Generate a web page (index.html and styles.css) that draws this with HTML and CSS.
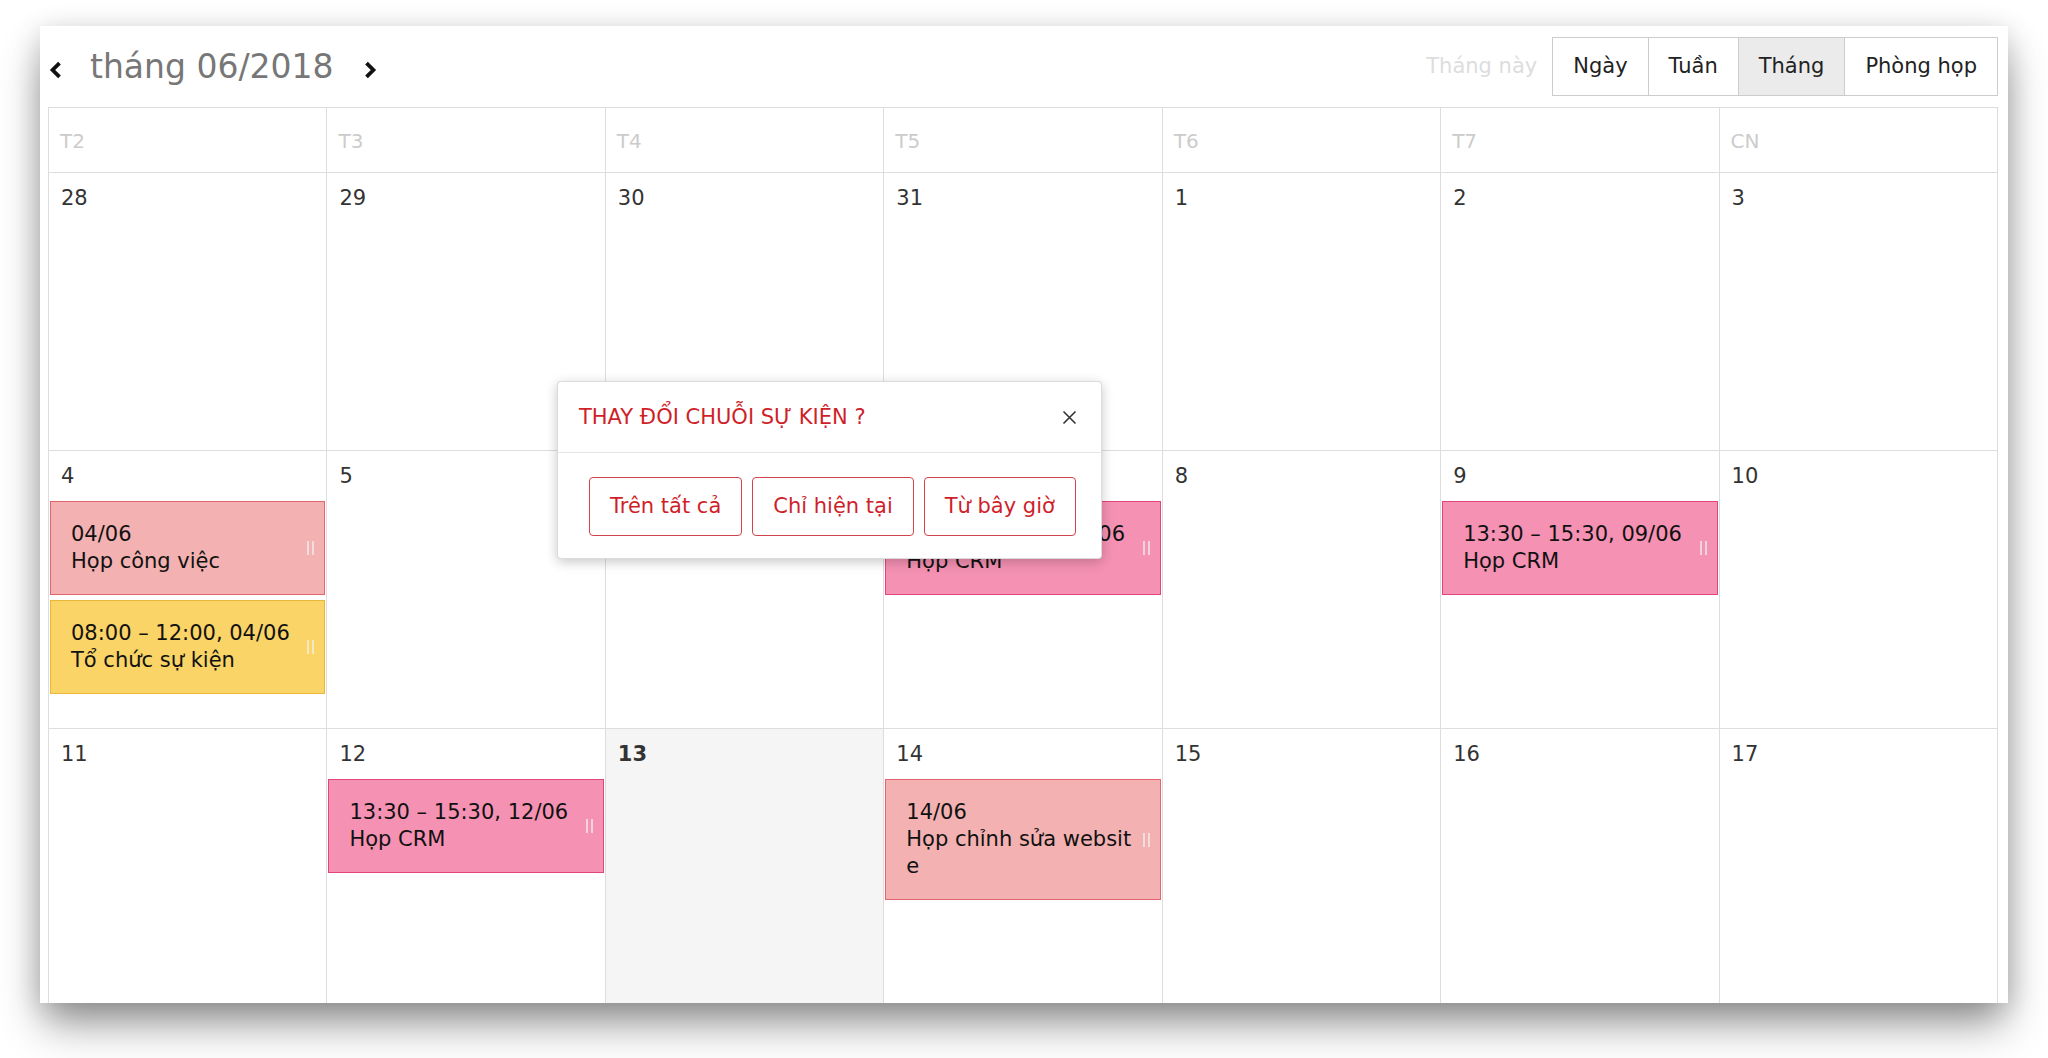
FILE: index.html
```html
<!DOCTYPE html>
<html lang="vi">
<head>
  <meta charset="UTF-8" />
  <meta name="viewport" content="width=device-width, initial-scale=1.0" />
  <title>Lịch tháng 06/2018</title>
  <link rel="stylesheet" href="styles.css">
</head>
<body>
  <div class="page">
    <div class="window">
      <header class="toolbar">
        <div class="nav">
          <button class="nav-arrow" aria-label="Tháng trước">
            <svg width="15" height="18" viewBox="0 0 15 18"><path d="M11.5 2.2 L4.6 9 L11.5 15.8" fill="none" stroke="#111" stroke-width="3.8"/></svg>
          </button>
          <h2 class="month-title">tháng 06/2018</h2>
          <button class="nav-arrow" aria-label="Tháng sau">
            <svg width="15" height="18" viewBox="0 0 15 18"><path d="M3.5 2.2 L10.4 9 L3.5 15.8" fill="none" stroke="#111" stroke-width="3.8"/></svg>
          </button>
        </div>
        <div class="views">
          <span class="today-link">Tháng này</span>
          <div class="view-group">
            <button class="view-btn">Ngày</button>
            <button class="view-btn">Tuần</button>
            <button class="view-btn active">Tháng</button>
            <button class="view-btn">Phòng họp</button>
          </div>
        </div>
      </header>

      <div class="month">
        <div class="dow">T2</div>
        <div class="dow">T3</div>
        <div class="dow">T4</div>
        <div class="dow">T5</div>
        <div class="dow">T6</div>
        <div class="dow">T7</div>
        <div class="dow">CN</div>

        <div class="day"><div class="day-num">28</div></div>
        <div class="day"><div class="day-num">29</div></div>
        <div class="day"><div class="day-num">30</div></div>
        <div class="day"><div class="day-num">31</div></div>
        <div class="day"><div class="day-num">1</div></div>
        <div class="day"><div class="day-num">2</div></div>
        <div class="day"><div class="day-num">3</div></div>

        <div class="day">
          <div class="day-num">4</div>
          <div class="event salmon">04/06<br>Họp công việc<span class="grip"></span></div>
          <div class="event yellow">08:00 – 12:00, 04/06<br>Tổ chức sự kiện<span class="grip"></span></div>
        </div>
        <div class="day"><div class="day-num">5</div></div>
        <div class="day"><div class="day-num">6</div></div>
        <div class="day">
          <div class="day-num">7</div>
          <div class="event pink">13:30 – 15:30, 07/06<br>Họp CRM<span class="grip"></span></div>
        </div>
        <div class="day"><div class="day-num">8</div></div>
        <div class="day">
          <div class="day-num">9</div>
          <div class="event pink">13:30 – 15:30, 09/06<br>Họp CRM<span class="grip"></span></div>
        </div>
        <div class="day"><div class="day-num">10</div></div>

        <div class="day"><div class="day-num">11</div></div>
        <div class="day">
          <div class="day-num">12</div>
          <div class="event pink">13:30 – 15:30, 12/06<br>Họp CRM<span class="grip"></span></div>
        </div>
        <div class="day today"><div class="day-num">13</div></div>
        <div class="day">
          <div class="day-num">14</div>
          <div class="event salmon">14/06<br>Họp chỉnh sửa website<span class="grip"></span></div>
        </div>
        <div class="day"><div class="day-num">15</div></div>
        <div class="day"><div class="day-num">16</div></div>
        <div class="day"><div class="day-num">17</div></div>
      </div>

      <div class="modal">
        <div class="modal-header">
          <h4 class="modal-title">THAY ĐỔI CHUỖI SỰ KIỆN ?</h4>
          <button class="modal-close" aria-label="Đóng">
            <svg width="15" height="15" viewBox="0 0 15 15"><path d="M1.5 1.5 L13.5 13.5 M13.5 1.5 L1.5 13.5" stroke="#333" stroke-width="1.6"/></svg>
          </button>
        </div>
        <div class="modal-footer">
          <button class="btn-outline">Trên tất cả</button>
          <button class="btn-outline">Chỉ hiện tại</button>
          <button class="btn-outline">Từ bây giờ</button>
        </div>
      </div>
    </div>
  </div>
</body>
</html>
```

FILE: styles.css
```css
* {
  margin: 0;
  padding: 0;
  box-sizing: border-box;
  font-family: "DejaVu Sans", "Noto Sans", sans-serif;
}

body {
  background: #ffffff;
  color: #333;
  height: 1058px;
  overflow: hidden;
}

button {
  font: inherit;
  background: none;
  border: none;
  cursor: pointer;
}

.page {
  padding: 26px 0 0 40px;
}

.window {
  position: relative;
  width: 1968px;
  height: 977px;
  padding: 11px 10px 0 8px;
  background: #fff;
  overflow: hidden;
  box-shadow: 0 24px 40px -4px rgba(0, 0, 0, 0.42), 0 4px 26px rgba(0, 0, 0, 0.14);
}

/* toolbar */
.toolbar {
  display: flex;
  justify-content: space-between;
  align-items: center;
  height: 59px;
  margin-bottom: 11px;
}

.nav {
  display: flex;
  align-items: center;
}

.nav-arrow {
  display: flex;
  margin-top: 6px;
}

.month-title {
  font-size: 33px;
  line-height: 40px;
  font-weight: normal;
  color: #777;
  margin: 0 29px 0 27px;
}

.views {
  display: flex;
  align-items: center;
}

.today-link {
  font-size: 21px;
  line-height: 25px;
  color: #ddd;
  margin-right: 16px;
}

.view-group {
  display: flex;
}

.view-btn {
  font-size: 21px;
  line-height: 25px;
  padding: 16px 20px;
  border: 1px solid #ccc;
  margin-left: -1px;
  color: #222;
  background: #fff;
}

.view-btn.active {
  background: #ebebeb;
}

/* month grid */
.month {
  display: grid;
  grid-template-columns: repeat(7, 1fr);
  border-top: 1px solid #ddd;
  border-left: 1px solid #ddd;
}

.dow {
  height: 65px;
  padding: 21px 11px 0;
  font-size: 20px;
  line-height: 24px;
  color: #ccc;
  border-right: 1px solid #ddd;
  border-bottom: 1px solid #ddd;
}

.day {
  height: 278px;
  padding-top: 13px;
  border-right: 1px solid #ddd;
  border-bottom: 1px solid #ddd;
}

.day.today {
  background: #f5f5f5;
}

.day-num {
  padding: 0 12px;
  margin-bottom: 13px;
  font-size: 21px;
  line-height: 24px;
  color: #333;
}

.today .day-num {
  font-weight: bold;
}

.event {
  position: relative;
  margin: 0 1px 5px;
  padding: 19px 24px 19px 20px;
  border: 1px solid;
  font-size: 21px;
  line-height: 27px;
  color: #111;
  word-break: break-all;
}

.event.salmon {
  background: #f3b1b1;
  border-color: #e2646f;
}

.event.yellow {
  background: #fad466;
  border-color: #eab838;
}

.event.pink {
  background: #f591b3;
  border-color: #e2457a;
}

.grip {
  position: absolute;
  right: 10px;
  top: 50%;
  width: 7px;
  height: 14px;
  margin-top: -7px;
  border-left: 2px solid rgba(240, 240, 240, 0.7);
  border-right: 2px solid rgba(240, 240, 240, 0.7);
}

/* recurring event dialog */
.modal {
  position: absolute;
  left: 517px;
  top: 355px;
  width: 545px;
  background: #fff;
  border: 1px solid rgba(0, 0, 0, 0.14);
  border-radius: 4px;
  box-shadow: 0 3px 12px rgba(0, 0, 0, 0.22);
}

.modal-header {
  display: flex;
  justify-content: space-between;
  align-items: center;
  padding: 23px 24px 23px 21px;
  border-bottom: 1px solid #e5e5e5;
}

.modal-title {
  font-size: 21px;
  line-height: 24px;
  font-weight: normal;
  color: #cf1f2b;
}

.modal-close {
  display: flex;
}

.modal-footer {
  display: flex;
  gap: 10px;
  padding: 24px 0 22px 31px;
}

.btn-outline {
  flex: none;
  white-space: nowrap;
  font-size: 21px;
  line-height: 25px;
  padding: 16px 20px;
  border: 1px solid #d4434d;
  border-radius: 4px;
  color: #cf1f2b;
  background: #fff;
}
```
